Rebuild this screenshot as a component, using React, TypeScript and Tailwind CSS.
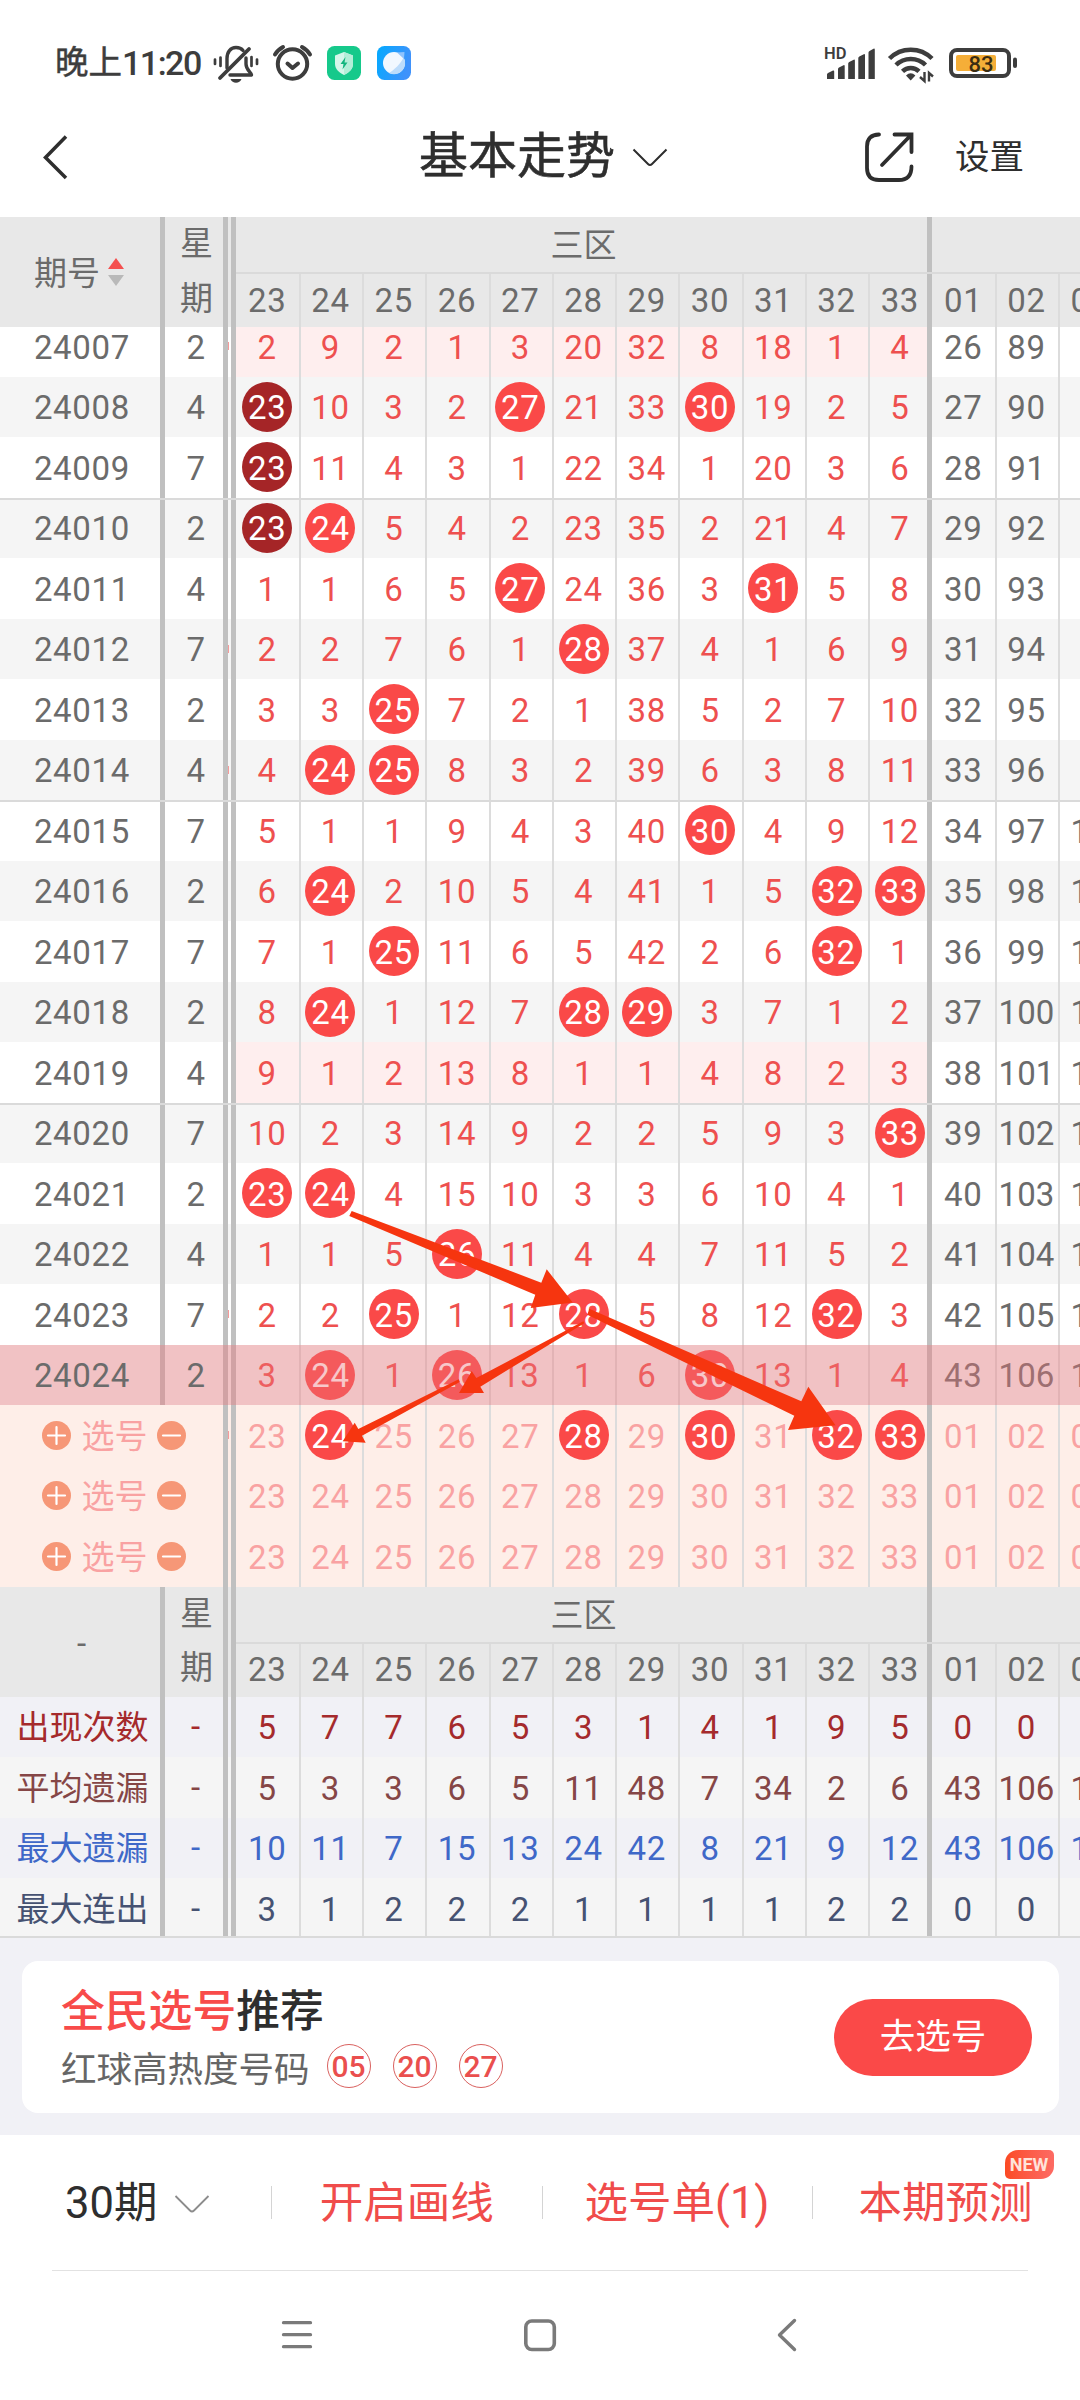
import clsx from 'clsx';

const ZONE = ['23', '24', '25', '26', '27', '28', '29', '30', '31', '32', '33'];
const TAIL = ['01', '02', '03'];
const NUMBERS = [...ZONE, ...TAIL];

// zone ends on 33, the blue numbers start right after it
const LAST_ZONE = 10;

// "*" marks a drawn ball, "!" one that has repeated three times in a row
const ISSUES: { id: string; day: string; cells: string; edge?: boolean }[] = [
  { id: '24007', day: '2', cells: '2 9 2 1 3 20 32 8 18 1 4 26 89 2', edge: true },
  { id: '24008', day: '4', cells: '!23 10 3 2 *27 21 33 *30 19 2 5 27 90 3' },
  { id: '24009', day: '7', cells: '!23 11 4 3 1 22 34 1 20 3 6 28 91 4' },
  { id: '24010', day: '2', cells: '!23 *24 5 4 2 23 35 2 21 4 7 29 92 5' },
  { id: '24011', day: '4', cells: '1 1 6 5 *27 24 36 3 *31 5 8 30 93 6' },
  { id: '24012', day: '7', cells: '2 2 7 6 1 *28 37 4 1 6 9 31 94 7', edge: true },
  { id: '24013', day: '2', cells: '3 3 *25 7 2 1 38 5 2 7 10 32 95 8' },
  { id: '24014', day: '4', cells: '4 *24 *25 8 3 2 39 6 3 8 11 33 96 9', edge: true },
  { id: '24015', day: '7', cells: '5 1 1 9 4 3 40 *30 4 9 12 34 97 10' },
  { id: '24016', day: '2', cells: '6 *24 2 10 5 4 41 1 5 *32 *33 35 98 11' },
  { id: '24017', day: '7', cells: '7 1 *25 11 6 5 42 2 6 *32 1 36 99 12' },
  { id: '24018', day: '2', cells: '8 *24 1 12 7 *28 *29 3 7 1 2 37 100 13' },
  { id: '24019', day: '4', cells: '9 1 2 13 8 1 1 4 8 2 3 38 101 14' },
  { id: '24020', day: '7', cells: '10 2 3 14 9 2 2 5 9 3 *33 39 102 15' },
  { id: '24021', day: '2', cells: '*23 *24 4 15 10 3 3 6 10 4 1 40 103 16' },
  { id: '24022', day: '4', cells: '1 1 5 *26 11 4 4 7 11 5 2 41 104 17' },
  { id: '24023', day: '7', cells: '2 2 *25 1 12 *28 5 8 12 *32 3 42 105 18', edge: true },
  { id: '24024', day: '2', cells: '3 *24 1 *26 13 1 6 *30 13 1 4 43 106 19' },
];

const PICKS = [
  { cells: '23 *24 25 26 27 *28 29 *30 31 *32 *33 01 02 03', edge: true },
  { cells: '23 24 25 26 27 28 29 30 31 32 33 01 02 03', edge: false },
  { cells: '23 24 25 26 27 28 29 30 31 32 33 01 02 03', edge: false },
];

const STATS = [
  { label: '出现次数', tone: 'text-[#a52a2c] bg-[#f1f1f6]', cells: '5 7 7 6 5 3 1 4 1 9 5 0 0 0' },
  { label: '平均遗漏', tone: 'text-[#854646] bg-[#f5f5f5]', cells: '5 3 3 6 5 11 48 7 34 2 6 43 106 19' },
  { label: '最大遗漏', tone: 'text-[#3f68c8] bg-[#f1f1f6]', cells: '10 11 7 15 13 24 42 8 21 9 12 43 106 19' },
  { label: '最大连出', tone: 'text-[#465272] bg-[#f5f5f5]', cells: '3 1 2 2 2 1 1 1 1 2 2 0 0 0' },
];

function Cell({ value, index, tone, fill }: { value: string; index: number; tone: string; fill?: string }) {
  const drawn = value[0] === '*' || value[0] === '!';
  return (
    <div
      className={clsx(
        'flex w-[63.27px] shrink-0 items-center justify-center border-[#dcdcdc]',
        index === 0 || index === LAST_ZONE + 1 ? '' : 'border-l-2',
        index === LAST_ZONE ? 'border-r-[5px] border-r-[#c0c0c0] pl-[3px]' : index !== 0 && index !== LAST_ZONE + 1 && 'pr-[2px]',
        index <= LAST_ZONE && fill,
      )}
    >
      {drawn ? (
        <span
          className={clsx(
            '-mx-2 flex size-[50px] shrink-0 items-center justify-center rounded-full pt-[2px] text-white',
            value[0] === '!' ? 'bg-[#a52527]' : 'bg-[#fa4948]',
          )}
        >
          {value.slice(1)}
        </span>
      ) : (
        <span className={clsx('pt-[2px] whitespace-nowrap', tone, value.length > 2 && 'tracking-normal')}>{value}</span>
      )}
    </div>
  );
}

function Edge({ mark }: { mark?: boolean }) {
  return (
    <div className="flex w-[7.6px] shrink-0 items-center border-r-[5px] border-[#c0c0c0]">
      {mark && <span className="h-2 w-px bg-[#f59a9a]" />}
    </div>
  );
}

function TableHead({ sortable }: { sortable?: boolean }) {
  return (
    <div className="flex h-[110px] shrink-0 bg-[#e8e8e8] text-[#6b6b6b]">
      <div className="flex w-[165px] shrink-0 items-center justify-center border-r-[5px] border-[#c0c0c0]">
        {sortable ? (
          <div className="mr-[2px] flex items-center gap-[8px]">
            <span className="pt-[2px] tracking-normal">期号</span>
            <svg className="h-[28px] w-4" viewBox="0 0 16 28">
              <path d="M8 0l8 11H0z" fill="#f4504f" />
              <path d="M0 17h16L8 28z" fill="#b9b9b9" />
            </svg>
          </div>
        ) : (
          <span className="pt-[3px] pl-[4px]">-</span>
        )}
      </div>
      <div className="flex w-[63px] shrink-0 flex-col items-center border-r-[5px] border-[#c0c0c0] pl-[5px] leading-[54.5px] tracking-normal">
        <span>星</span>
        <span>期</span>
      </div>
      <Edge />
      <div className="flex flex-col">
        <div className="flex h-[55px]">
          <div className="flex w-[696px] items-center justify-center border-r-[5px] border-[#c0c0c0] pt-[2px] pl-[5px] tracking-normal">三区</div>
        </div>
        <div className="flex h-[55px] border-t-2 border-[#dadada] *:pb-[3px]">
          {NUMBERS.map((n, i) => (
            <Cell key={n} value={n} index={i} tone="" />
          ))}
        </div>
      </div>
    </div>
  );
}

function IssueRow({ issue, index }: { issue: (typeof ISSUES)[number]; index: number }) {
  const cells = issue.cells.split(' ');
  const missed = cells.slice(0, LAST_ZONE + 1).every((c) => c[0] !== '*' && c[0] !== '!');
  const current = index === ISSUES.length - 1;
  return (
    <div
      className={clsx(
        'relative flex shrink-0 text-[#6b6b6b]',
        // the first row is partly scrolled under the header
        index === 0 ? 'h-[49.5px] *:pb-[11px]' : 'h-[60.5px]',
        index % 2 ? 'bg-[#f5f5f5]' : 'bg-white',
      )}
    >
      <div className="flex w-[165px] shrink-0 items-center justify-center border-r-[5px] border-[#c0c0c0] pl-[4px]">
        <span className={clsx('pt-[2px]', current && 'relative z-10')}>{issue.id}</span>
      </div>
      <div className="flex w-[63px] shrink-0 items-center justify-center border-r-[5px] border-[#c0c0c0] pl-[4px]">
        <span className={clsx('pt-[2px]', current && 'relative z-10')}>{issue.day}</span>
      </div>
      <Edge mark={issue.edge} />
      {cells.map((c, i) => (
        <Cell key={i} value={c} index={i} tone={i <= LAST_ZONE ? 'text-[#ee504f]' : 'text-[#6b6b6b]'} fill={missed ? 'bg-[#feeeee]' : undefined} />
      ))}
      {/* five-issue group rule */}
      {index % 5 === 3 && <div className="absolute inset-x-0 top-0 h-[2px] bg-[#dadada]" />}
      {current && <div className="absolute inset-0 bg-[#eb757a]/40" />}
    </div>
  );
}

function RoundSign({ plus }: { plus?: boolean }) {
  return (
    <svg className="size-[29px]" viewBox="0 0 29 29" stroke="#fff" strokeWidth="2.2" strokeLinecap="round">
      <circle cx="14.5" cy="14.5" r="14.5" fill="#f69777" stroke="none" />
      <path d="M6 14.5h17" />
      {plus && <path d="M14.5 6v17" />}
    </svg>
  );
}

function PickRow({ cells, edge }: { cells: string; edge: boolean }) {
  return (
    <div className="flex h-[60.5px] shrink-0 bg-[#feeee8] text-[#f9a2a2]">
      <div className="flex w-[228px] shrink-0 items-center border-r-[5px] border-[#c0c0c0] pl-[42px]">
        <RoundSign plus />
        <span className="mr-[9.5px] ml-[10.5px] pt-[2px] tracking-normal">选号</span>
        <RoundSign />
      </div>
      <Edge mark={edge} />
      {cells.split(' ').map((c, i) => (
        <Cell key={i} value={c} index={i} tone="" />
      ))}
    </div>
  );
}

function Arrows() {
  return (
    <svg className="absolute top-0 left-0 h-[1721px] w-[1080px]" viewBox="0 217 1080 1721" fill="#f6350f">
      <path d="M351.7 1211L541.3 1282.7L546.7 1269.3L572.7 1302.5L530.7 1308L535.3 1294.7L349.3 1216z" />
      <path d="M589.3 1308.7L801.3 1401.3L808.3 1386.7L835.5 1425.3L788 1430L794.3 1415.7L587.3 1314.7z" />
      <path d="M583.3 1321.3L476.3 1378L471.7 1371L459 1393H484L480.3 1386.7L584.3 1323.3z" />
      <path d="M458.7 1379.3L358.3 1429L354.7 1422.7L342.7 1441.3L365.7 1442.7L362 1435.7L459.7 1382z" />
    </svg>
  );
}

function StatusBar() {
  return (
    <div className="flex h-[104px] shrink-0 items-start pt-[41px] pr-[62px] pl-[55px] text-[#3d3d3d]">
      <div className="flex h-[44px] w-[158px] items-center whitespace-nowrap">
        <span className="text-[33.5px] [-webkit-text-stroke:0.5px]">晚上</span>
        <span className="text-[34px] font-medium tracking-[-1.5px]">11:20</span>
      </div>
      <svg className="h-[44px] w-[46px]" viewBox="213 41 46 44" fill="none" stroke="#3d3d3d" strokeWidth="3.4" strokeLinecap="round">
        <path d="M227 68V58.500C227 52 230.500 47.500 236 47.500C239 47.500 241.500 48.500 243 50.500" />
        <path d="M246 58V64C246 70 251 72 251.500 75H230" strokeLinejoin="round" />
        <path d="M220 78L249 49" strokeWidth="3.8" />
        <path d="M230.500 79h11c-1 2.500-3 3.800-5.500 3.800s-4.500-1.300-5.500-3.800z" fill="#3d3d3d" stroke="none" />
        <path d="M215 59.500v4.500M220.500 57.500v8.500M251.500 57v9M257 59.500v4.500" strokeWidth="2.700" />
      </svg>
      <svg className="ml-[13px] h-[44px] w-[42px]" viewBox="272 41 42 44" fill="none" stroke="#3d3d3d" strokeWidth="4" strokeLinecap="round" strokeLinejoin="round">
        <circle cx="292.500" cy="64" r="14.700" />
        <path d="M275 54.500c2-3.500 4.500-5.500 8-7.500M310 54.500c-2-3.500-4.500-5.500-8-7.500" />
        <path d="M287.500 63.500l5 4.500l5.500-4.500" />
      </svg>
      <svg className="mt-[5px] ml-[13px] size-[34px]" viewBox="0 0 34 34">
        <rect width="34" height="34" rx="7.500" fill="#16c98b" />
        <path d="M17 6l9 3.500v8.500c0 5-4 8.500-9 11-5-2.500-9-6-9-11V9.500z" fill="#d5f6ea" />
        <path d="M17 6l9 3.500v8.500c0 5-4 8.500-9 11z" fill="#b4eed8" />
        <path d="M18.500 11l-5 7h3l-1 5.500 5-7h-3z" fill="#14b57e" />
      </svg>
      <svg className="mt-[5px] ml-[16px] size-[34px]" viewBox="0 0 34 34">
        <defs>
          <linearGradient id="sky" x1="0" y1="0" x2="1" y2="0.300">
            <stop offset="0" stopColor="#03aaff" />
            <stop offset="1" stopColor="#3f92fb" />
          </linearGradient>
        </defs>
        <rect width="34" height="34" rx="7.500" fill="url(#sky)" />
        <circle cx="17" cy="17" r="11" fill="#f1f8ff" />
        <path d="M26.500 11.500A11 11 0 0 1 12 27C17 24 24 17.500 26.500 11.500z" fill="#bcdcfb" />
        <path d="M20 6.500l7.500-.5-.5 7z" fill="#8fc3fd" />
      </svg>
      <div className="flex-1" />
      <svg className="h-[44px] w-[52px]" viewBox="824 41 52 44" fill="#3d3d3d">
        <text x="824" y="59" fontSize="16.500" fontWeight="600" fontFamily="Roboto, sans-serif">HD</text>
        <path d="M827 79v-4.500q0-1 1-1.600l5-2.400q1.200-.4 1.200 1V79zM838 79V69q0-1 1-1.500l4.500-2.300q1.200-.5 1.200 1V79zM848.200 79V63.500q0-1 1-1.500l4.500-2.300q1.200-.5 1.200 1V79zM858.300 79V58q0-1 1-1.500l4.500-2.300q1.200-.5 1.200 1V79zM868.500 79V52.500q0-1 1-1.500l4-2.300q1.300-.5 1.300 1V79z" />
      </svg>
      <svg className="ml-[11px] h-[44px] w-[48px]" viewBox="887 41 48 44" fill="none" stroke="#3d3d3d" strokeWidth="4.500">
        <path d="M889.500 58.500A30 30 0 0 1 932 58.500" />
        <path d="M896 65A21 21 0 0 1 925.500 65" />
        <path d="M902.500 71.300A12 12 0 0 1 919 71.300" />
        <path d="M906 75.500q4.700-4.500 9.400 0l-4.700 5z" fill="#3d3d3d" stroke="none" />
        <path d="M924.500 72v9l-4.500-4M929 81.500v-8.500l4 3.500" strokeWidth="2.400" />
      </svg>
      <svg className="ml-[14px] h-[44px] w-[69px]" viewBox="949 41 69 44">
        <rect x="951" y="50" width="58" height="26" rx="6" fill="none" stroke="#3d3d3d" strokeWidth="4" />
        <rect x="956" y="55" width="40" height="16" rx="2" fill="#f5ae38" />
        <rect x="1013" y="57.500" width="4" height="10.500" rx="2" fill="#3d3d3d" />
        <text x="981" y="71.500" fontSize="22" fontWeight="500" textAnchor="middle" fill="#3a2c12" fontFamily="Roboto, sans-serif">83</text>
      </svg>
    </div>
  );
}

function TitleBar() {
  return (
    <div className="flex h-[113px] shrink-0 items-start text-[#2e2e2e]">
      <svg className="mt-[28px] ml-[40px] h-[50px] w-[30px]" viewBox="0 0 30 50" fill="none" stroke="currentColor" strokeWidth="3.500">
        <path d="M26 4.500L5.500 25.500L26 46" />
      </svg>
      <h1 className="ml-[349px] w-[197px] text-[49px] leading-[105px] whitespace-nowrap [-webkit-text-stroke:0.6px]">基本走势</h1>
      <svg className="mt-[42px] ml-[16px] h-[24px] w-[36px]" viewBox="0 0 36 24" fill="none" stroke="currentColor" strokeWidth="2">
        <path d="M1.500 3.500L16 18q2 2 4 0L34.500 3.500" />
      </svg>
      <svg className="mt-[27px] ml-[195px] h-[52px] w-[52px]" viewBox="863 131 52 52" fill="none" stroke="currentColor" strokeWidth="3.800" strokeLinecap="round">
        <path d="M879 134.500c-8 0-12 4.500-12 12V168c0 8 4 12 12 12h20c8 0 12.500-4 12.500-13.500" />
        <path d="M894.500 134.500H911.500V152M911 135L882 165" />
      </svg>
      <span className="ml-[40px] text-[34.5px] leading-[106px]">设置</span>
    </div>
  );
}

function Promo() {
  return (
    <div className="flex h-[197px] shrink-0 bg-[#f1f1f6] pt-[23px] pr-[21px] pb-[22px] pl-[22px]">
      <div className="flex flex-1 items-center justify-between rounded-[16px] bg-white pr-[27px] pl-[39px]">
        <div className="flex flex-col pt-[8px]">
          <p className="text-[43.8px] leading-[52px] font-medium text-[#2e2e2e]">
            <span className="text-[#f84b4a]">全民选号</span>推荐
          </p>
          <div className="mt-[6px] flex items-center text-[#666]">
            <span className="text-[35.5px] leading-[52px]">红球高热度号码</span>
            <div className="-mt-[8px] ml-[17px] flex gap-[22px]">
              {['05', '20', '27'].map((n) => (
                <span key={n} className="flex size-[44px] items-center justify-center rounded-full border border-[#d9615f] pt-px text-[30px] leading-none font-medium text-[#ea4f4e]">
                  {n}
                </span>
              ))}
            </div>
          </div>
        </div>
        <button className="flex h-[77px] w-[198px] items-center justify-center rounded-full bg-[#fa4948] pt-[2px] text-[35.5px] text-white">去选号</button>
      </div>
    </div>
  );
}

function Toolbar() {
  return (
    <div className="mx-[52px] flex h-[136px] shrink-0 items-center border-b border-[#e2e2e2] text-[43.5px] whitespace-nowrap text-[#f04c4b]">
      <div className="flex w-[219px] shrink-0 items-center pl-[13px] text-[#2e2e2e]">
        <span className="pt-[3px]">30期</span>
        <svg className="ml-[17px] h-[24px] w-[36px]" viewBox="0 0 36 24" fill="none" stroke="#8c8c8c" strokeWidth="1.800">
          <path d="M1.500 5L16 19.500q2 2 4 0L34.500 5" />
        </svg>
      </div>
      <div className="h-[33px] w-px shrink-0 bg-[#d4d4d4]" />
      <div className="flex w-[269.5px] shrink-0 justify-center pt-[3px]">开启画线</div>
      <div className="h-[33px] w-px shrink-0 bg-[#d4d4d4]" />
      <div className="flex w-[269px] shrink-0 justify-center pt-[3px]">选号单(1)</div>
      <div className="h-[33px] w-px shrink-0 bg-[#d4d4d4]" />
      <div className="relative ml-[46px] pt-[3px]">
        本期预测
        <span className="absolute -top-[18px] left-[146px] flex h-[29px] w-[49px] items-center justify-center rounded-[5px] rounded-tl-[13px] rounded-br-[13px] bg-linear-to-r from-[#fb4a22] to-[#fd6a63] text-[18px] leading-none font-bold text-[#ffe3da]">
          NEW
        </span>
      </div>
    </div>
  );
}

function NavBar() {
  return (
    <div className="flex flex-1 items-start pt-[44px] text-[#7a7a7a]">
      <svg className="ml-[280px] h-[40px] w-[34px]" viewBox="280 2315 34 40" stroke="currentColor" strokeWidth="3.300" strokeLinecap="round">
        <path d="M283.500 2322.700h27M283.500 2334.700h27M283.500 2346.700h27" />
      </svg>
      <svg className="ml-[208px] h-[40px] w-[36px]" viewBox="522 2315 36 40" fill="none" stroke="currentColor" strokeWidth="3.600">
        <rect x="525.800" y="2321" width="28.500" height="28.500" rx="6" />
      </svg>
      <svg className="ml-[218px] h-[40px] w-[26px]" viewBox="777 2315 26 40" fill="none" stroke="currentColor" strokeWidth="3.400" strokeLinecap="round" strokeLinejoin="round">
        <path d="M795.500 2320.500L780.500 2335L795.500 2349.500" />
      </svg>
    </div>
  );
}

export default function App() {
  return (
    <div className="flex h-[2400px] w-[1080px] flex-col overflow-hidden bg-white font-[Roboto,'Noto_Sans_CJK_SC',sans-serif]">
      <StatusBar />
      <TitleBar />
      <div className="relative flex h-[1721px] shrink-0 flex-col overflow-hidden border-b-2 border-[#dadada] text-[33px] leading-none tracking-[0.7px]">
        <TableHead sortable />
        {ISSUES.map((issue, i) => (
          <IssueRow key={issue.id} issue={issue} index={i} />
        ))}
        {PICKS.map((p, i) => (
          <PickRow key={i} {...p} />
        ))}
        <TableHead />
        {STATS.map((s) => (
          <div key={s.label} className={clsx('flex h-[60.5px] shrink-0', s.tone)}>
            <div className="flex w-[165px] shrink-0 items-center justify-center border-r-[5px] border-[#c0c0c0] pt-[2px] pl-[5px] tracking-normal">{s.label}</div>
            <div className="flex w-[63px] shrink-0 items-center justify-center border-r-[5px] border-[#c0c0c0] pl-[4px]">-</div>
            <Edge />
            {s.cells.split(' ').map((c, i) => (
              <Cell key={i} value={c} index={i} tone="" />
            ))}
          </div>
        ))}
        <Arrows />
      </div>
      <Promo />
      <Toolbar />
      <NavBar />
    </div>
  );
}
